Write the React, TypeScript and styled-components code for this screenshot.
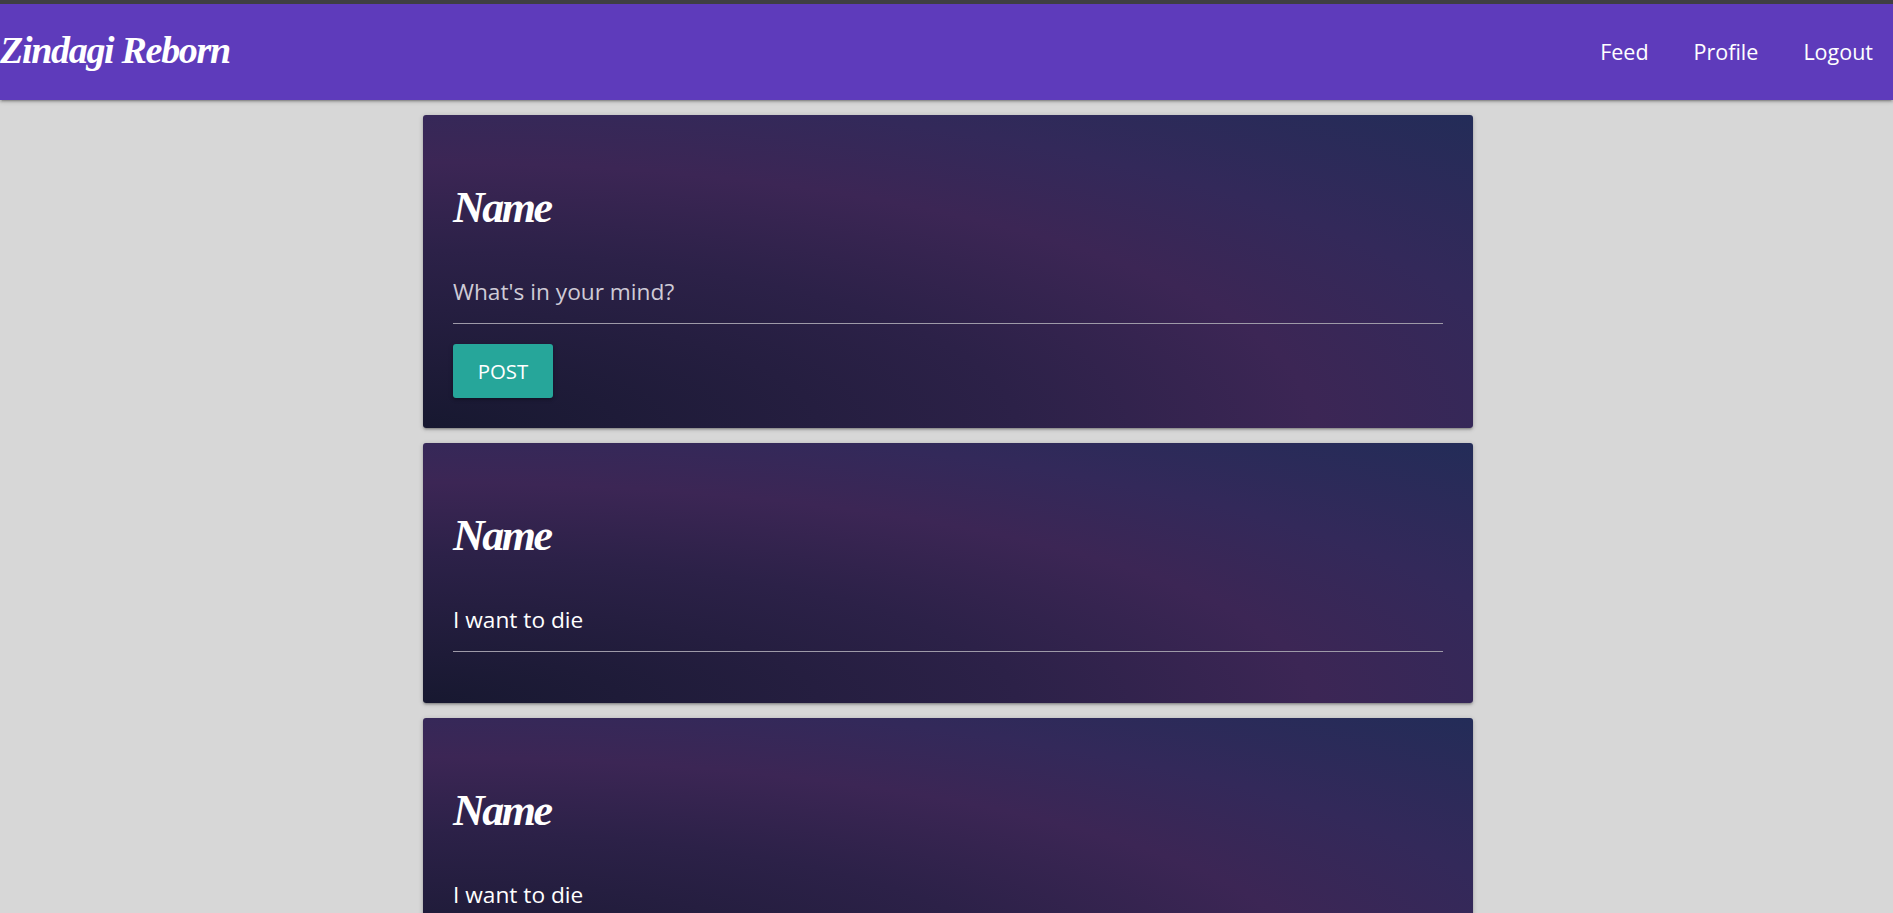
import styled, { createGlobalStyle } from 'styled-components';

const SCRIPT_FONT = `'Liberation Serif', cursive`;
const BODY_FONT = `'Open Sans', 'Noto Sans', sans-serif`;

const GlobalStyle = createGlobalStyle`
  html, body {
    margin: 0;
    height: 100%;
    overflow: hidden;
    background: #d7d7d7;
  }
  * {
    box-sizing: border-box;
  }
`;

const Page = styled.div`
  height: 100vh;
  overflow: hidden;
  border-top: 4px solid #3f3f42;
  font-family: ${BODY_FONT};
`;

const Navbar = styled.nav`
  height: 96px;
  background: #5e3bbb;
  color: #fff;
  display: flex;
  align-items: center;
  justify-content: space-between;
  padding-right: 20px;
  box-shadow: 0 2px 2px 0 rgba(0, 0, 0, 0.14), 0 3px 1px -2px rgba(0, 0, 0, 0.12),
    0 1px 5px 0 rgba(0, 0, 0, 0.2);
`;

const Brand = styled.a`
  font-family: ${SCRIPT_FONT};
  font-style: italic;
  font-weight: 700;
  font-size: 38px;
  letter-spacing: -1.3px;
  line-height: 1;
  margin-bottom: 4px;
`;

const NavLinks = styled.ul`
  display: flex;
  gap: 45px;
  list-style: none;
  margin: 0 0 2px;
  padding: 0;
  font-size: 21.5px;
`;

const Feed = styled.main`
  width: 1050px;
  margin: 15px auto 0 423px;
  display: flex;
  flex-direction: column;
  gap: 15px;
`;

const Card = styled.section`
  padding: 57px 30px 0;
  border-radius: 3px;
  color: #fff;
  background: radial-gradient(
    ellipse at bottom left,
    #171830,
    #2c2148 40%,
    #3c2655 60%,
    #33295a 76%,
    #232c58
  );
  box-shadow: 0 2px 2px 0 rgba(0, 0, 0, 0.14), 0 3px 1px -2px rgba(0, 0, 0, 0.12),
    0 1px 5px 0 rgba(0, 0, 0, 0.2);
`;

const CardTitle = styled.h2`
  margin: 0;
  height: 72px;
  display: flex;
  align-items: center;
  font-family: ${SCRIPT_FONT};
  font-style: italic;
  font-weight: 700;
  font-size: 44px;
  letter-spacing: -2.5px;
  line-height: 1;
`;

const Line = styled.div<{ $muted?: boolean }>`
  height: 57px;
  margin-top: 23px;
  padding-top: 11px;
  font-size: 22.7px;
  line-height: 28px;
  color: ${(p) => (p.$muted ? '#cfcbd6' : '#fff')};
  border-bottom: 1px solid #9e9aa8;
`;

const PostButton = styled.button`
  display: block;
  width: 100px;
  height: 54px;
  margin: 20px 0 30px;
  padding: 0;
  border: none;
  border-radius: 3px;
  background: #26a69a;
  color: #fff;
  font-family: ${BODY_FONT};
  font-size: 20.4px;
  box-shadow: 0 2px 2px 0 rgba(0, 0, 0, 0.14), 0 1px 5px 0 rgba(0, 0, 0, 0.2);
`;

const Spacer = styled.div`
  height: 51px;
`;

const posts = ['I want to die', 'I want to die'];

export default function App() {
  return (
    <Page>
      <GlobalStyle />
      <Navbar>
        <Brand>Zindagi Reborn</Brand>
        <NavLinks>
          <li>Feed</li>
          <li>Profile</li>
          <li>Logout</li>
        </NavLinks>
      </Navbar>
      <Feed>
        <Card>
          <CardTitle>Name</CardTitle>
          <Line $muted>What's in your mind?</Line>
          <PostButton type="button">POST</PostButton>
        </Card>
        {posts.map((text, i) => (
          <Card key={i}>
            <CardTitle>Name</CardTitle>
            <Line>{text}</Line>
            <Spacer />
          </Card>
        ))}
      </Feed>
    </Page>
  );
}
